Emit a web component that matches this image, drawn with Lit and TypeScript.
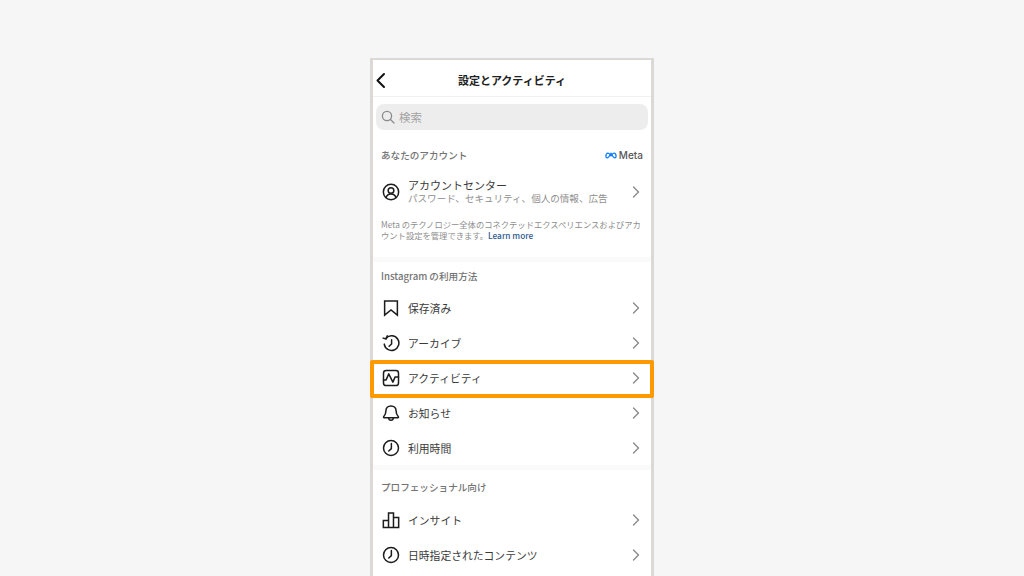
import { LitElement, html, css, svg } from "lit";
import { customElement } from "lit/decorators.js";

const clock = svg`<circle cx="12" cy="12" r="10"/><path d="M12.500 6v6.800L9 16"/>`;
const icons: Record<string, unknown> = {
  user: svg`<circle cx="12" cy="12" r="10.200"/><circle cx="12" cy="10" r="3.800"/><path d="M5.400 19.200c1-3 3.600-4.700 6.600-4.700s5.600 1.700 6.600 4.700"/>`,
  bookmark: svg`<path stroke-linejoin="miter" d="M3.500 2.500h17v19L12 14.500 3.500 21.500z"/>`,
  archive: svg`<path d="M5.500 5.500A9.800 9.800 0 1 1 3 13.500"/><path d="M1.500 5.500l4 1.200 1.500-4.200"/><path d="M12.800 7.500v5.800l-3.300 3"/>`,
  activity: svg`<rect x="2" y="2" width="20" height="20" rx="3.500"/><path d="M2 14.500h3.500l3.500-8 5.500 11 3-7h4.500"/>`,
  bell: svg`<path d="M12 2.500c-4.200 0-6.800 3-6.800 6.800 0 4-1 5.500-3 7.700-.4.500-.1 1.200.6 1.200h18.400c.7 0 1-.7.600-1.200-2-2.200-3-3.700-3-7.700 0-3.800-2.600-6.800-6.800-6.800z"/><path d="M9 18.500a3 3 0 0 0 6 0"/>`,
  clock,
  chart: svg`<path stroke-linejoin="miter" d="M1.800 22v-9.500h6.900V22zM8.700 22V2.500h6.600V22zM15.300 22V8.500h6.900V22z"/>`,
};

type Row = { icon: string; label: string };
const usage: Row[] = [
  { icon: "bookmark", label: "保存済み" },
  { icon: "archive", label: "アーカイブ" },
  { icon: "activity", label: "アクティビティ" },
  { icon: "bell", label: "お知らせ" },
  { icon: "clock", label: "利用時間" },
];
const pro: Row[] = [
  { icon: "chart", label: "インサイト" },
  { icon: "clock", label: "日時指定されたコンテンツ" },
];

@customElement("app-root")
export class AppRoot extends LitElement {
  static styles = css`
    :host {
      display: block;
      width: 1024px;
      height: 576px;
      overflow: hidden;
      background: #f6f6f6;
      font-family: "Noto Sans CJK JP", "Liberation Sans", sans-serif;
      color: #262626;
    }
    .phone {
      box-sizing: border-box;
      width: 284px;
      height: 530px;
      margin: 58px 0 0 370px;
      border: 3px solid #dbd8d5;
      border-bottom: none;
      border-top-width: 2px;
      background: #fff;
      display: flex;
      flex-direction: column;
    }
    .header {
      height: 37px;
      flex: none;
      box-sizing: border-box;
      padding-top: 4px;
      border-bottom: 1px solid #f0f0f0;
      display: flex;
      align-items: center;
      justify-content: center;
      position: relative;
      font-size: 11px;
      font-weight: 700;
      color: #222;
    }
    .back {
      position: absolute;
      left: 2px;
      top: 12px;
      width: 11px;
      height: 17px;
    }
    .search {
      height: 26px;
      flex: none;
      margin: 7px 3px 0 3px;
      border-radius: 8px;
      background: #ededed;
      display: flex;
      align-items: center;
      gap: 4px;
      padding-left: 5px;
      font-size: 11.500px;
      color: #a3a3a3;
    }
    .search svg { width: 14px; height: 14px; }
    .head {
      height: 18px;
      display: flex;
      align-items: center;
      justify-content: space-between;
      padding: 0 8px 0 8px;
      font-size: 9.600px;
      font-weight: 500;
      color: #737373;
      flex: none;
    }
    .first { margin-top: 16px; }
    .meta {
      display: flex;
      align-items: center;
      gap: 2px;
      font-family: "Inter", sans-serif;
      font-size: 10px;
      font-weight: 500;
      color: #555;
    }
    .meta svg { width: 12px; height: 7px; }
    .row {
      height: 35px;
      flex: none;
      display: flex;
      align-items: center;
      padding: 0 11px 0 9px;
      position: relative;
      font-size: 10.800px;
      color: #3a3a3a;
    }
    .icon {
      width: 18px;
      height: 18px;
      flex: none;
      margin-right: 8px;
      fill: none;
      stroke: #1c1c1c;
      stroke-width: 2;
      stroke-linecap: round;
      stroke-linejoin: round;
    }
    .label { flex: 1; white-space: nowrap; }
    .chev {
      width: 8px;
      height: 12px;
      flex: none;
      fill: none;
      stroke: #8a8a8a;
      stroke-width: 1.400;
      stroke-linecap: round;
      stroke-linejoin: round;
    }
    .account { height: 43px; margin-top: 6px; }
    .two { flex: 1; display: flex; flex-direction: column; }
    .two .t1 { font-size: 11px; line-height: 13px; }
    .two .t2 { font-size: 9.550px; line-height: 13px; color: #8e8e8e; white-space: nowrap; }
    .note {
      margin: 6px 9px 0 8px;
      font-size: 8.300px;
      line-height: 11px;
      color: #8e8e8e;
      flex: none;
      height: 26px;
    }
    .note a { color: #2b5a8e; font-weight: 500; text-decoration: none; }
    .band { height: 5px; background: #fafafa; flex: none; }
    .band1 { margin-top: 12px; }
    .sec { margin-top: 5px; margin-bottom: 5px; }
    .sec2 { margin-top: 8px; margin-bottom: 6px; }
    .mark {
      position: absolute;
      left: -3px;
      right: -3px;
      top: 0;
      bottom: -3px;
      border: 4px solid #ff9900;
      border-radius: 2px;
      pointer-events: none;
    }
  `;

  private chev() {
    return html`<svg class="chev" viewBox="0 0 8 12"><path d="M1.500 1l5 5-5 5" /></svg>`;
  }

  private row(r: Row) {
    return html`<div class="row">
      <svg class="icon" viewBox="0 0 24 24">${icons[r.icon]}</svg>
      <span class="label">${r.label}</span>
      ${this.chev()}
      ${r.icon === "activity" ? html`<div class="mark"></div>` : ""}
    </div>`;
  }

  render() {
    return html`<div class="phone">
      <div class="header">
        <svg class="back" viewBox="0 0 11 17" fill="none" stroke="#111" stroke-width="2" stroke-linecap="round" stroke-linejoin="round"><path d="M9 2L2.500 8.500 9 15" /></svg>
        設定とアクティビティ
      </div>
      <div class="search">
        <svg viewBox="0 0 14 14" fill="none" stroke="#8a8a8a" stroke-width="1.300" stroke-linecap="round"><circle cx="6" cy="6" r="4.600" /><path d="M9.500 9.500L13 13" /></svg>
        検索
      </div>
      <div class="head first">
        <span>あなたのアカウント</span>
        <span class="meta">
          <svg viewBox="0 0 26 14" fill="none" stroke="#0a7cff" stroke-width="2.800" stroke-linecap="round" stroke-linejoin="round"><path d="M6.500 2C3.500 2 2 5.500 2 8.500S3.500 12 5 12c2.500 0 4.500-3.500 8-10 3.500 6.500 5.500 10 8 10 1.500 0 3-.5 3-3.500S22.500 2 19.500 2C17 2 15 5 13 8c-2-3-4-6-6.500-6z" /></svg>
          Meta
        </span>
      </div>
      <div class="row account">
        <svg class="icon" viewBox="0 0 24 24">${icons.user}</svg>
        <div class="two">
          <span class="t1">アカウントセンター</span>
          <span class="t2">パスワード、セキュリティ、個人の情報、広告</span>
        </div>
        ${this.chev()}
      </div>
      <div class="note">Meta のテクノロジー全体のコネクテッドエクスペリエンスおよびアカウント設定を管理できます。<a>Learn more</a></div>
      <div class="band band1"></div>
      <div class="head sec"><span>Instagram の利用方法</span></div>
      ${usage.map((r) => this.row(r))}
      <div class="band"></div>
      <div class="head sec2"><span>プロフェッショナル向け</span></div>
      ${pro.map((r) => this.row(r))}
    </div>`;
  }
}
